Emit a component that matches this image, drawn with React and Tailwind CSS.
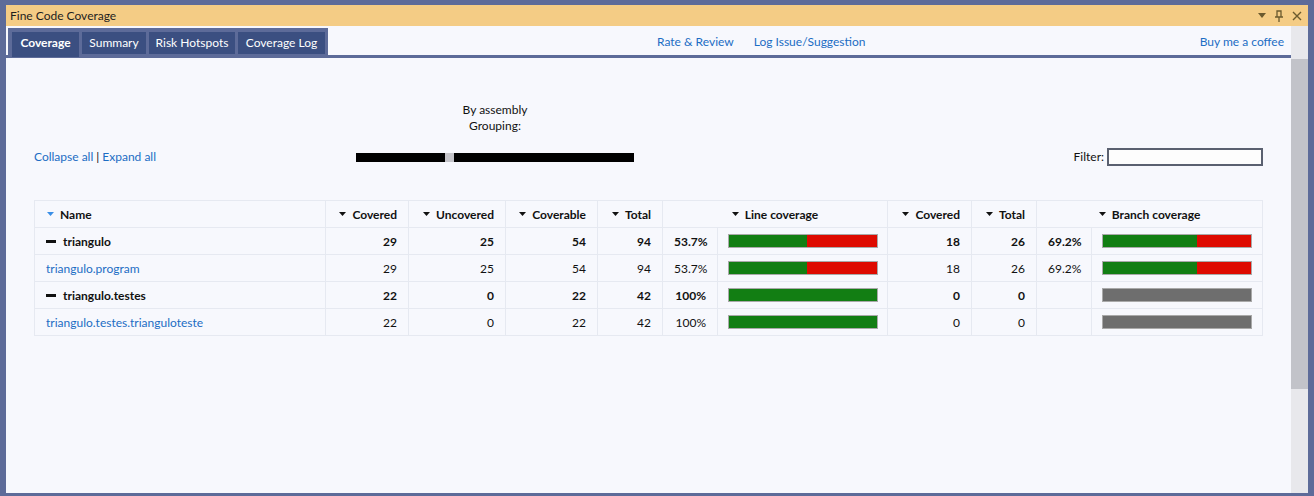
import React from 'react';

const font = { fontFamily: 'Lato, "Liberation Sans", sans-serif' };

const SortArrow = ({ blue }) => (
  <svg width="7" height="4" viewBox="0 0 7 4" className="inline-block mr-[6px] mb-[2px]">
    <polygon points="0,0 7,0 3.5,4" fill={blue ? '#3a8ee6' : '#111'} />
  </svg>
);

const Bar = ({ green, gray }) => (
  <div className="h-[14px] w-[150px] border border-[#a9a9a9] flex">
    {gray ? (
      <div className="flex-1 bg-[#6e6e6e]" />
    ) : (
      <>
        <div className="bg-[#127e13]" style={{ width: green }} />
        {green < 148 && <div className="flex-1 bg-[#de0a00]" />}
      </>
    )}
  </div>
);

const rows = [
  { name: 'triangulo', group: true, c: 29, u: 25, cv: 54, t: 94, lp: '53.7%', lg: 78, bc: 18, bt: 26, bp: '69.2%', bg: 94 },
  { name: 'triangulo.program', c: 29, u: 25, cv: 54, t: 94, lp: '53.7%', lg: 78, bc: 18, bt: 26, bp: '69.2%', bg: 94 },
  { name: 'triangulo.testes', group: true, c: 22, u: 0, cv: 22, t: 42, lp: '100%', lg: 148, bc: 0, bt: 0, bp: '', gray: true },
  { name: 'triangulo.testes.trianguloteste', c: 22, u: 0, cv: 22, t: 42, lp: '100%', lg: 148, bc: 0, bt: 0, bp: '', gray: true },
];

export default function App() {
  const td = 'border border-[#e6e9f1] px-[11px] pt-[1px] text-right';
  const th = 'border border-[#e6e9f1] px-[11px] pt-[1px] text-right font-bold';

  return (
    <div className="w-[1314px] h-[496px] bg-[#5d6b99] pl-[6px] pr-[6px] pt-[5px] pb-[3px] flex flex-col text-[12px] text-[#111]" style={font}>
      {/* Title bar */}
      <div className="h-[21px] bg-[#f4cc85] flex items-center justify-between pl-[4px] pr-[6px] shrink-0">
        <span className="text-[#1e1e1e]">Fine Code Coverage</span>
        <div className="flex items-center gap-[9px]">
          <svg width="8" height="5" viewBox="0 0 8 5"><polygon points="0,0 8,0 4,5" fill="#6b5a2e" /></svg>
          <svg width="8" height="12" viewBox="0 0 8 12">
            <path d="M2 1h4v6H2z M0 7h8 M4 7v5" stroke="#6b5a2e" strokeWidth="1.3" fill="none" />
          </svg>
          <svg width="10" height="10" viewBox="0 0 10 10">
            <path d="M1 1L9 9M9 1L1 9" stroke="#6b5a2e" strokeWidth="1.4" />
          </svg>
        </div>
      </div>

      <div className="flex-1 flex min-h-0">
        {/* Main panel */}
        <div className="flex-1 bg-[#f7f8fd] flex flex-col">
          <div className="h-[29px] flex items-start pt-[2px] pl-[2px] pr-[7px] shrink-0">
            <div className="h-[27px] bg-[#5d6b99] flex items-start gap-[3px] pt-[4px] pl-[4px] pr-[3px]">
              <div className="relative z-10 h-[25px] w-[67px] bg-[#3b4f81] text-white font-bold flex items-center justify-center pb-[3px]">Coverage</div>
              <div className="h-[22px] w-[64px] bg-[#3b4f81] text-white flex items-center justify-center">Summary</div>
              <div className="h-[22px] w-[86px] bg-[#3b4f81] text-white flex items-center justify-center">Risk Hotspots</div>
              <div className="h-[22px] w-[87px] bg-[#3b4f81] text-white flex items-center justify-center">Coverage Log</div>
            </div>
            <div className="flex items-center h-[27px] text-[#1c6dc4] ml-[329px] gap-[20px]">
              <span>Rate &amp; Review</span>
              <span>Log Issue/Suggestion</span>
            </div>
            <div className="flex-1" />
            <div className="flex items-center h-[27px] text-[#1c6dc4]">Buy me a coffee</div>
          </div>
          <div className="h-[3px] bg-[#5d6b99] shrink-0" />

          <div className="px-[28px] pt-[44px]">
            <div className="flex items-end">
              <div className="w-[322px] h-[18px] flex items-center text-[#1c6dc4]">
                <span>Collapse all</span>
                <span className="mx-[3px] text-[#111]">|</span>
                <span>Expand all</span>
              </div>
              <div className="w-[278px] flex flex-col items-center">
                <div className="leading-[16px] text-center">By assembly</div>
                <div className="leading-[16px] text-center">Grouping:</div>
                <div className="h-[18px] mt-[14px] w-full flex items-center">
                  <div className="h-[9px] w-full bg-black flex">
                    <div className="w-[89px]" />
                    <div className="w-[9px] bg-[#c3c3c9]" />
                  </div>
                </div>
              </div>
              <div className="flex-1 flex items-center justify-end h-[18px]">
                <span className="mr-[3px]">Filter:</span>
                <div className="w-[156px] h-[18px] border-2 border-[#5a6070] bg-[#fdfdfd]" />
              </div>
            </div>

            <table className="mt-[34px] border-collapse w-[1228px] table-fixed">
              <colgroup>
                <col className="w-[291px]" />
                <col className="w-[83px]" />
                <col className="w-[97px]" />
                <col className="w-[92px]" />
                <col className="w-[65px]" />
                <col className="w-[55px]" />
                <col className="w-[170px]" />
                <col className="w-[84px]" />
                <col className="w-[65px]" />
                <col className="w-[55px]" />
                <col className="w-[171px]" />
              </colgroup>
              <thead>
                <tr className="h-[27px]">
                  <th className="border border-[#e6e9f1] pl-[12px] pt-[1px] text-left font-bold"><SortArrow blue />Name</th>
                  <th className={th}><SortArrow />Covered</th>
                  <th className={th}><SortArrow />Uncovered</th>
                  <th className={th}><SortArrow />Coverable</th>
                  <th className={th}><SortArrow />Total</th>
                  <th colSpan={2} className="border border-[#e6e9f1] pt-[1px] text-center font-bold"><SortArrow />Line coverage</th>
                  <th className={th}><SortArrow />Covered</th>
                  <th className={th}><SortArrow />Total</th>
                  <th colSpan={2} className="border border-[#e6e9f1] pt-[1px] text-center font-bold"><SortArrow />Branch coverage</th>
                </tr>
              </thead>
              <tbody>
                {rows.map((r) => (
                  <tr key={r.name} className={`h-[27px] ${r.group ? 'font-bold' : ''}`}>
                    <td className="border border-[#e6e9f1] pl-[11px] pt-[1px]">
                      {r.group ? (
                        <span className="flex items-center">
                          <span className="inline-block w-[10px] h-[3px] bg-[#111] mr-[7px]" />
                          {r.name}
                        </span>
                      ) : (
                        <span className="text-[#1c6dc4]">{r.name}</span>
                      )}
                    </td>
                    <td className={td}>{r.c}</td>
                    <td className={td}>{r.u}</td>
                    <td className={td}>{r.cv}</td>
                    <td className={td}>{r.t}</td>
                    <td className={td}>{r.lp}</td>
                    <td className="border border-[#e6e9f1] pl-[10px]"><Bar green={r.lg} /></td>
                    <td className={td}>{r.bc}</td>
                    <td className={td}>{r.bt}</td>
                    <td className={td}>{r.bp}</td>
                    <td className="border border-[#e6e9f1] pl-[10px]"><Bar green={r.bg} gray={r.gray} /></td>
                  </tr>
                ))}
              </tbody>
            </table>
          </div>
        </div>

        {/* Scrollbar */}
        <div className="w-[17px] bg-[#e8e8ec] pt-[33px] shrink-0">
          <div className="h-[330px] bg-[#c2c3c9]" />
        </div>
      </div>
    </div>
  );
}
